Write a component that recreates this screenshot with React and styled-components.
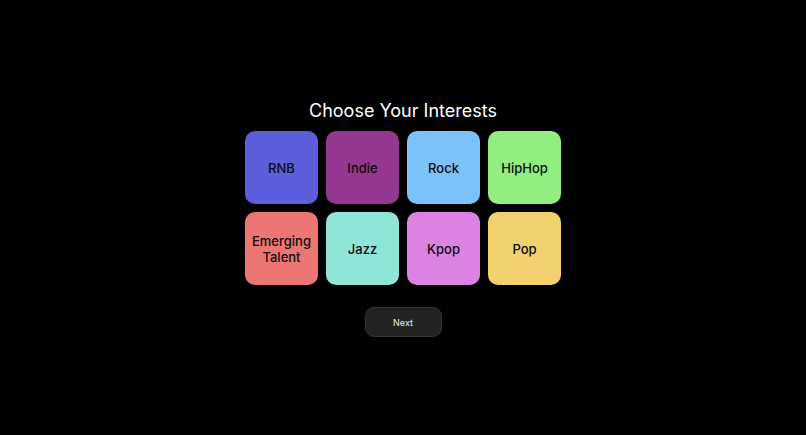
import React from "react";
import styled, { createGlobalStyle } from "styled-components";

const GlobalStyle = createGlobalStyle`
  *, *::before, *::after { box-sizing: border-box; }
  body {
    margin: 0;
    background: #000;
    font-family: Inter, sans-serif;
  }
`;

const Page = styled.main`
  min-height: 100vh;
  display: flex;
  flex-direction: column;
  align-items: center;
  justify-content: center;
  padding: 16px;
  color: #fff;
`;

const Title = styled.h1`
  margin: 0 0 9px;
  font-size: 18px;
  line-height: 23px;
  font-weight: 400;
  text-align: center;
`;

const Grid = styled.div`
  display: grid;
  grid-template-columns: repeat(4, 73px);
  gap: 8px;
`;

const Tile = styled.button`
  aspect-ratio: 1;
  padding: 2px 0 0;
  border: 0;
  border-radius: 10px;
  background: ${(p) => p.$color};
  color: #0b0b0b;
  font: 500 13px/16px Inter, sans-serif;
  cursor: pointer;
`;

const NextButton = styled.button`
  margin-top: 22px;
  width: 77px;
  height: 30px;
  padding: 2px 0 0;
  border: 1px solid #333;
  border-radius: 9px;
  background: #232323;
  color: #eee;
  font: 400 9px/12px Inter, sans-serif;
  cursor: pointer;
`;

const interests = [
  { name: "RNB", color: "#5e5edd" },
  { name: "Indie", color: "#94388f" },
  { name: "Rock", color: "#7bc1fa" },
  { name: "HipHop", color: "#92ee80" },
  { name: "Emerging Talent", color: "#ec7673" },
  { name: "Jazz", color: "#8fe5d6" },
  { name: "Kpop", color: "#dc82e2" },
  { name: "Pop", color: "#f1d06e" },
];

export default function App() {
  return (
    <>
      <GlobalStyle />
      <Page>
        <Title>Choose Your Interests</Title>
        <Grid>
          {interests.map((i) => (
            <Tile key={i.name} type="button" $color={i.color}>{i.name}</Tile>
          ))}
        </Grid>
        <NextButton type="button">Next</NextButton>
      </Page>
    </>
  );
}
